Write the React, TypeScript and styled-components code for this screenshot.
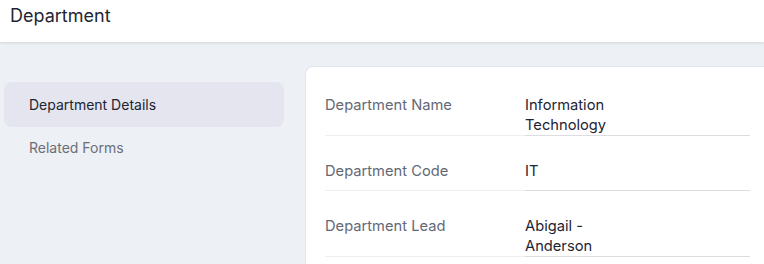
import React from "react";
import styled, { createGlobalStyle } from "styled-components";

const Global = createGlobalStyle`
  html, body { margin: 0; padding: 0; }
  body { background: #edf0f5; font-family: Inter, Lato, sans-serif; }
  #root { height: 264px; overflow: hidden; }
`;

const Page = styled.div`
  width: 764px;
  height: 264px;
  background: #edf0f5;
  overflow: hidden;
`;

const Header = styled.header`
  height: 42px;
  background: #ffffff;
  box-shadow: 0 1px 3px rgba(0, 0, 0, 0.12);
  display: flex;
  align-items: flex-start;
  padding: 6px 10px 0;
  box-sizing: border-box;
  position: relative;
  z-index: 1;
`;

const Title = styled.h1`
  margin: 0;
  font-size: 18px;
  line-height: 20px;
  font-weight: 400;
  color: #1f2633;
`;

const Body = styled.div`
  display: flex;
  padding: 24px 0 0 4px;
  gap: 21px;
`;

const Sidebar = styled.nav`
  width: 280px;
  padding-top: 16px;
  display: flex;
  flex-direction: column;
`;

const NavItem = styled.div<{ $active?: boolean }>`
  height: 45px;
  display: flex;
  align-items: center;
  padding-left: 25px;
  border-radius: 8px;
  font-size: 14px;
  background: ${(p) => (p.$active ? "#e4e5ef" : "transparent")};
  color: ${(p) => (p.$active ? "#1d2433" : "#6b6e78")};
  margin-bottom: ${(p) => (p.$active ? "-2px" : "0")};
`;

const Card = styled.section`
  flex: 1;
  height: 230px;
  background: #ffffff;
  border: 1px solid #dfe6ef;
  border-right: none;
  border-radius: 8px 0 0 0;
  padding: 3px 13px 0 19px;
`;

const Row = styled.div`
  display: grid;
  grid-template-columns: 200px 225px;
  margin-top: 25px;
  font-size: 14.7px;
  line-height: 20px;
`;

const Label = styled.div`
  color: #646875;
  border-bottom: 1px solid #eeeff2;
  min-height: 29px;
`;

const Value = styled.div`
  color: #1d2433;
  border-bottom: 1px solid #dcdde2;
  min-height: 29px;
  width: 100px;
  box-sizing: content-box;
  padding-right: 125px;
`;

const rows: [string, string][] = [
  ["Department Name", "Information Technology"],
  ["Department Code", "IT"],
  ["Department Lead", "Abigail - Anderson"],
];

export default function App() {
  return (
    <Page>
      <Global />
      <Header>
        <Title>Department</Title>
      </Header>
      <Body>
        <Sidebar>
          <NavItem $active>Department Details</NavItem>
          <NavItem>Related Forms</NavItem>
        </Sidebar>
        <Card>
          {rows.map(([l, v]) => (
            <Row key={l}>
              <Label>{l}</Label>
              <Value>{v}</Value>
            </Row>
          ))}
        </Card>
      </Body>
    </Page>
  );
}
